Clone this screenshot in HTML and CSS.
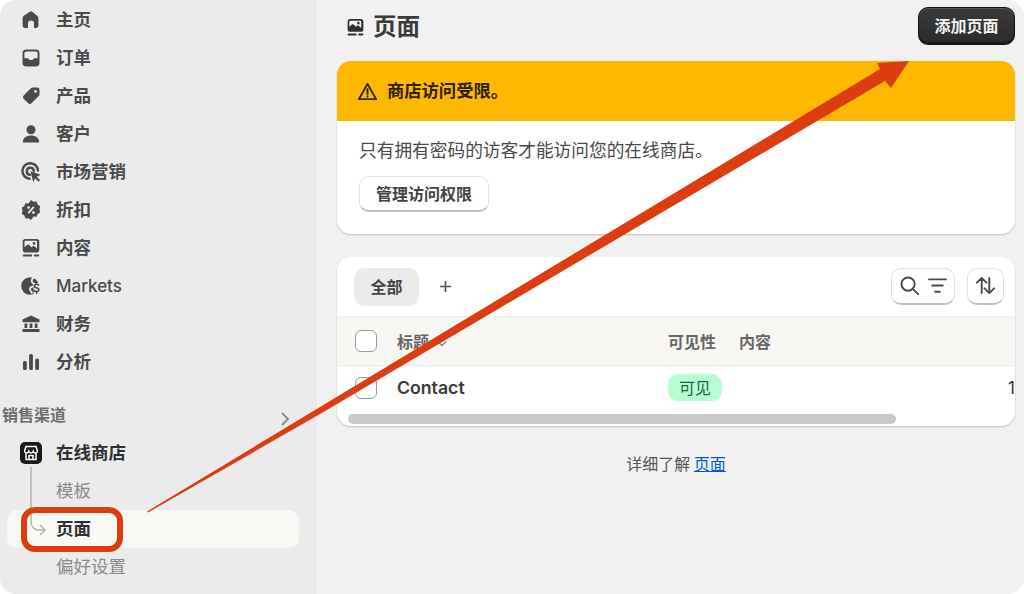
FILE: index.html
```html
<!DOCTYPE html>
<html lang="zh-CN">
<head>
<meta charset="utf-8">
<title>页面</title>
<link rel="stylesheet" href="styles.css">
</head>
<body>
<div class="app">
  <aside class="sidebar">
    <nav class="nav">
      <a class="row"><svg class="ico" viewBox="0 0 20 20"><path d="M8.400 1.900a2.400 2.400 0 0 1 3.200 0l4.900 4.200a2.600 2.600 0 0 1 .9 2v7.200a2.600 2.600 0 0 1-2.600 2.600H13v-4.400a3 3 0 0 0-6 0v4.400H4.200a2.600 2.600 0 0 1-2.600-2.600V8.100a2.600 2.600 0 0 1 .9-2z"/></svg><span>主页</span></a>
      <a class="row"><svg class="ico" viewBox="0 0 20 20"><path fill-rule="evenodd" d="M5.300 1.500h9.400A3.800 3.800 0 0 1 18.500 5.300v9.400a3.800 3.800 0 0 1-3.800 3.800H5.300a3.800 3.800 0 0 1-3.800-3.800V5.300A3.800 3.800 0 0 1 5.300 1.500zm0 1.900a1.900 1.900 0 0 0-1.900 1.900v4.900h2.900c.8 0 1.200.4 1.500 1 .3.500.9.900 2.200.9s1.900-.4 2.200-.9c.3-.6.700-1 1.500-1h2.900V5.300a1.900 1.900 0 0 0-1.900-1.900z"/></svg><span>订单</span></a>
      <a class="row"><svg class="ico" viewBox="0 0 20 20"><path fill-rule="evenodd" d="M11.800 1.500h4.400a2.300 2.300 0 0 1 2.300 2.300v4.400a2.600 2.600 0 0 1-.8 1.900l-7 7a2.600 2.600 0 0 1-3.700 0l-4.100-4.100a2.600 2.600 0 0 1 0-3.700l7-7a2.600 2.600 0 0 1 1.900-.8zm2.700 2.500a1.400 1.400 0 1 0 0 2.800 1.400 1.400 0 0 0 0-2.800z"/></svg><span>产品</span></a>
      <a class="row"><svg class="ico" viewBox="0 0 20 20"><circle cx="10" cy="5.800" r="4.500"/><path d="M10 11.500c4.500 0 7.800 2.300 8.200 6 .1.600-.4 1-1 1H2.800c-.6 0-1.100-.4-1-1 .4-3.700 3.700-6 8.200-6z"/></svg><span>客户</span></a>
      <a class="row"><svg class="ico" viewBox="0 0 20 20"><path class="ring" d="M17 8.500A7.800 7.800 0 1 0 8.500 16.800"/><path class="ring" d="M12.800 9a3.500 3.500 0 1 0-3.800 3.800"/><path d="M9.500 9.300l10.200 3.500-4 1.900 3.400 3.500-1.600 1.600-3.400-3.500-1.800 4z"/></svg><span>市场营销</span></a>
      <a class="row"><svg class="ico" viewBox="0 0 20 20"><path fill-rule="evenodd" d="M10 0l2.500 1.800 3.100-.2 1 2.900 2.700 1.700-.9 3 .9 3-2.700 1.700-1 2.900-3.100-.2L10 20l-2.500-1.800-3.100.2-1-2.900-2.700-1.700.9-3-.9-3 2.700-1.700 1-2.900 3.100.2zM12.200 6.300l-5.600 6.100 1.300 1.300 5.600-6.100zM7.600 6.200a1.400 1.400 0 1 0 0 2.800 1.400 1.400 0 0 0 0-2.800zm4.800 5a1.400 1.400 0 1 0 0 2.800 1.400 1.400 0 0 0 0-2.800z"/></svg><span>折扣</span></a>
      <a class="row"><svg class="ico" viewBox="0 0 20 20"><use href="#content-icon"/></svg><span>内容</span></a>
      <a class="row"><svg class="ico" viewBox="0 0 20 20"><circle cx="9" cy="10" r="8.800"/><rect class="cut-fill" x="12.500" y="7" width="7.500" height="13"/><path class="cut" d="M13.500 1c-2.500 1.500-3.200 3-2.700 4.500.4 1.500 2.600 1.800 2.300 3.600-.2 1.200-1.800 1.500-3.300 2.300-1 .6-1.200 1.600-.5 2.700l2 3.500"/><path d="M15.800 6v1.500c1.300.1 2.200.8 2.700 1.700l-1.300.8c-.4-.7-.9-1-1.600-1-.8 0-1.200.4-1.200.9 0 .6.400.8 1.500 1.200 1.600.5 2.700 1.200 2.700 2.700 0 1.400-1 2.300-2.300 2.500v1.700h-1.400v-1.700c-1.300-.2-2.300-.9-2.800-1.900l1.400-.8c.4.800 1 1.200 1.900 1.200.9 0 1.400-.4 1.400-1 0-.6-.4-.9-1.500-1.200-1.600-.5-2.700-1.200-2.700-2.600 0-1.300.8-2.200 2.200-2.400V6z"/></svg><span class="latin">Markets</span></a>
      <a class="row"><svg class="ico" viewBox="0 0 20 20"><path d="M10 1.500l8.500 4v2.800h-17V5.500z"/><path d="M3.500 9.500h2.800v4.500H3.500zM8.600 9.500h2.800v4.500H8.600zM13.700 9.500h2.800v4.500h-2.800zM1.500 15h17v3h-17z"/></svg><span>财务</span></a>
      <a class="row"><svg class="ico" viewBox="0 0 20 20"><rect x="2" y="9" width="3.800" height="9" rx="1.600"/><rect x="8.100" y="2" width="3.800" height="16" rx="1.600"/><rect x="14.200" y="6.500" width="3.800" height="11.500" rx="1.600"/></svg><span>分析</span></a>

      <div class="section"><span>销售渠道</span><svg class="chev" viewBox="0 0 12 16"><path d="M3 2l6 6-6 6"/></svg></div>

      <a class="row row-store"><svg class="ico" viewBox="0 0 22 22"><rect x="0" y="0" width="22" height="22" rx="5" fill="#1a1a1a"/><path class="store-lines" d="M6 4.500h10l1.500 4.500a2.200 2.200 0 0 1-4.300.4 2.300 2.300 0 0 1-4.400 0A2.200 2.200 0 0 1 4.500 9zM6 11v6.500h10V11M9 17.500v-4h4v4"/></svg><span>在线商店</span></a>
      <a class="row row-sub"><span>模板</span></a>
      <a class="row row-sub row-active"><span>页面</span></a>
      <a class="row row-sub"><span>偏好设置</span></a>
    </nav>
  </aside>

  <main class="main">
    <header class="top">
      <h1 class="title"><svg class="title-ico" viewBox="0 0 20 20"><use href="#content-icon"/></svg><span class="title-text">页面</span></h1>
      <button class="btn-dark">添加页面</button>
    </header>

    <section class="card">
      <div class="banner">
        <svg class="warn" viewBox="0 0 20 20"><path d="M10 2L19 18H1z"/><path d="M10 7.500v5M10 15v.3"/></svg>
        <strong class="banner-text">商店访问受限。</strong>
      </div>
      <div class="card-body">
        <p class="notice">只有拥有密码的访客才能访问您的在线商店。</p>
        <button class="btn-light">管理访问权限</button>
      </div>
    </section>

    <section class="card card-table">
      <div class="toolbar">
        <span class="tab">全部</span>
        <svg class="plus" viewBox="0 0 14 14"><path d="M7 1v12M1 7h12"/></svg>
        <span class="spacer"></span>
        <span class="tool tool-wide">
          <svg class="tool-ico" viewBox="0 0 20 20"><circle cx="8.500" cy="8.500" r="7"/><path d="M13.500 13.500l5.500 5.500"/></svg>
          <svg class="tool-ico" viewBox="0 0 20 20"><path d="M1 3.500h18M4.500 10h11M7.500 16.500h5"/></svg>
        </span>
        <span class="tool">
          <svg class="tool-ico" viewBox="0 0 20 20"><path d="M6 18V2M1 7l5-5 5 5M14 2v16M9 13l5 5 5-5"/></svg>
        </span>
      </div>
      <div class="grid grid-head">
        <span class="check"></span>
        <span class="th">标题<svg class="sort" viewBox="0 0 12 8"><path d="M1 1.500l5 5 5-5"/></svg></span>
        <span class="th">可见性</span>
        <span class="th">内容</span>
      </div>
      <div class="grid grid-row">
        <span class="check"></span>
        <span class="name">Contact</span>
        <span><span class="badge">可见</span></span>
        <span class="count">1</span>
      </div>
      <div class="scroll"><div class="thumb"></div></div>
    </section>

    <p class="foot">详细了解 <a class="link">页面</a></p>
  </main>
</div>

<svg class="overlay" viewBox="0 0 1024 594">
  <path class="tree" d="M31 467v55a8 8 0 0 0 8 8h6M40 525l5 5-5 5"/>
  <rect class="callout" x="24" y="510" width="96" height="39" rx="11"/>
  <polygon class="arrow" points="147,511.500 320,407 880,69 877,63 909,61 891,88 885,81 320,414 148,512.500"/>
</svg>

<svg class="defs" width="0" height="0">
  <symbol id="content-icon" viewBox="0 0 20 20">
    <path fill-rule="evenodd" d="M4.500 1h11A2.800 2.800 0 0 1 18.300 3.800v8A2.800 2.800 0 0 1 15.500 14.600h-11A2.800 2.800 0 0 1 1.700 11.800v-8A2.800 2.800 0 0 1 4.500 1zm0 1.800a1 1 0 0 0-1 1v5.500l2.800-2.500c.5-.4 1.100-.4 1.600 0l2.600 2.400 1.300-1c.5-.4 1.100-.4 1.600 0l2.600 2.300V3.800a1 1 0 0 0-1-1zM13 4a1.400 1.400 0 1 1 0 2.800A1.400 1.400 0 0 1 13 4z"/>
    <rect x="1.700" y="16.400" width="9.500" height="2" rx="1"/>
    <rect x="12.800" y="16.400" width="5.500" height="2" rx="1"/>
  </symbol>
</svg>
</body>
</html>
```
FILE: styles.css
```css
* { box-sizing: border-box; }
html, body { margin: 0; height: 100%; background: #fff; overflow: hidden; }
body {
  position: relative;
  font-family: "Noto Sans CJK SC", Inter, sans-serif;
  font-size: 16px;
  color: #303030;
}
.app {
  display: flex;
  width: 1024px;
  height: 594px;
  border-radius: 16px;
  overflow: hidden;
}

/* sidebar */
.sidebar {
  width: 316px;
  flex: none;
  background: #ebebeb;
  border-right: 1px solid #e6e6e6;
}
.nav { display: flex; flex-direction: column; padding: 1px 16px 0 2px; }
.row {
  display: flex;
  align-items: center;
  gap: 15px;
  height: 38px;
  margin-left: 5px;
  padding-left: 14px;
  font-size: 17.500px;
  font-weight: 700;
  color: #4a4a4a;
  border-radius: 10px;
}
.row > span { padding-bottom: 3px; }
.row > .latin { padding-bottom: 0; }
.ico { width: 20px; height: 20px; fill: #4a4a4a; flex: none; }
.ring { fill: none; stroke: #4a4a4a; stroke-width: 2.500; stroke-linecap: round; }
.cut { fill: none; stroke: #ebebeb; stroke-width: 1.800; }
.cut-fill { fill: #ebebeb; }
.latin { font-family: Inter, sans-serif; font-size: 17px; font-weight: 500; }
.section {
  display: flex;
  justify-content: space-between;
  align-items: center;
  height: 38px;
  margin-top: 15px;
  padding-right: 8px;
  font-size: 16px;
  font-weight: 700;
  color: #6d6d6d;
}
.section > span { padding-bottom: 2px; }
.chev {
  width: 12px;
  height: 16px;
  margin-top: 7px;
  fill: none;
  stroke: #8a8a8a;
  stroke-width: 1.800;
}
.row-store { color: #303030; padding-left: 13px; gap: 14px; }
.row-store .ico { width: 22px; height: 22px; }
.store-lines { fill: none; stroke: #fff; stroke-width: 1.500; }
.row-sub { padding-left: 49px; font-weight: 400; color: #8a8a8a; }
.row-active { background: #f8f8f4; color: #303030; font-weight: 700; }

/* main */
.main {
  flex: 1;
  min-width: 0;
  background: #f1f1f1;
  padding: 7px 9px 0 21px;
}
.top { display: flex; justify-content: space-between; align-items: flex-start; height: 54px; }
.title {
  display: flex;
  align-items: center;
  gap: 8px;
  margin: 2px 0 0 9px;
  height: 36px;
  font-size: 23.500px;
  font-weight: 700;
  color: #3a3a3a;
}
.title-text { padding-bottom: 4px; }
.title-ico { width: 19px; height: 19px; fill: #303030; }
button { font-family: inherit; font-size: 16px; font-weight: 700; }
.btn-dark {
  width: 97px;
  height: 38px;
  padding: 0 0 2px;
  color: #f4f4f4;
  background: linear-gradient(#3a3a3a, #2b2b2b);
  border: 1px solid #111;
  border-radius: 10px;
  box-shadow: inset 0 1px 0 #5a5a5a, inset 0 -2px 0 #1a1a1a;
}
.card {
  background: #fff;
  border-radius: 14px;
  overflow: hidden;
  box-shadow: 0 1px 2px rgba(0, 0, 0, .22);
}
.banner {
  display: flex;
  align-items: center;
  gap: 10px;
  height: 60px;
  padding-left: 21px;
  background: #ffb800;
  color: #2b2100;
  font-size: 17.300px;
}
.banner-text { padding-bottom: 3px; }
.warn { width: 19px; height: 19px; fill: none; stroke: #2b2100; stroke-width: 2; stroke-linejoin: round; stroke-linecap: round; }
.card-body { height: 113px; padding: 16px 22px 0; }
.notice { margin: 0 0 15px; height: 24px; line-height: 24px; font-size: 17.700px; color: #4a4a4a; }
.btn-light {
  display: block;
  width: 130px;
  height: 36px;
  padding: 0 0 2px;
  color: #444;
  background: #fff;
  border: 1px solid #e3e3e3;
  border-bottom: 2px solid #bdbdbd;
  border-radius: 10px;
}
.card-table { margin-top: 23px; height: 169px; }
.toolbar { display: flex; align-items: center; height: 59px; padding: 0 11px 0 17px; }
.tab {
  display: flex;
  align-items: center;
  justify-content: center;
  width: 65px;
  height: 38px;
  padding-bottom: 2px;
  background: #ebebeb;
  border-radius: 10px;
  font-weight: 700;
  color: #444;
}
.plus { width: 13px; height: 13px; margin-left: 20px; fill: none; stroke: #555; stroke-width: 1.800; }
.spacer { flex: 1; }
.tool {
  display: flex;
  align-items: center;
  justify-content: center;
  gap: 9px;
  width: 37px;
  height: 37px;
  margin-left: 12px;
  margin-top: -1px;
  background: #fff;
  border: 1px solid #e3e3e3;
  border-bottom: 2px solid #c4c4c4;
  border-radius: 10px;
}
.tool-wide { width: 64px; }
.tool-ico { width: 19px; height: 19px; fill: none; stroke: #4a4a4a; stroke-width: 2; stroke-linecap: round; stroke-linejoin: round; }
.grid {
  display: grid;
  grid-template-columns: 42px 271px 71px 1fr;
  align-items: center;
  padding-left: 18px;
}
.grid-head {
  height: 50px;
  background: #f7f6f3;
  border-top: 1px solid #efefec;
  border-bottom: 1px solid #e8e8e6;
}
.grid-row { height: 48px; padding-bottom: 5px; }
.check {
  display: block;
  width: 22px;
  height: 22px;
  background: #fff;
  border: 1px solid #9a9a9a;
  border-radius: 6px;
}
.th { display: flex; align-items: center; gap: 8px; font-weight: 700; color: #666; }
.sort { width: 10px; height: 7px; margin-top: 4px; fill: none; stroke: #777; stroke-width: 1.500; }
.name { font-family: Inter, sans-serif; font-size: 17.700px; font-weight: 600; color: #3a3a3a; }
.badge {
  display: inline-flex;
  align-items: center;
  justify-content: center;
  width: 54px;
  height: 27px;
  padding-bottom: 2px;
  background: #b4fed2;
  border-radius: 10px;
  color: #2d5d45;
}
.count { font-family: Inter, sans-serif; justify-self: end; font-size: 17px; }
.scroll { padding: 0 119px 0 11px; }
.thumb { height: 10px; background: #c9c9c9; border-radius: 5px; }
.foot { margin: 27px 0 0; text-align: center; line-height: 20px; color: #555; }
.link { color: #005bd3; text-decoration: underline; }

/* annotation layer */
.overlay {
  position: absolute;
  left: 0;
  top: 0;
  width: 1024px;
  height: 594px;
  pointer-events: none;
}
.tree { fill: none; stroke: #b3b3b3; stroke-width: 1.500; }
.callout { fill: none; stroke: #dc3c10; stroke-width: 6; }
.arrow { fill: #dc3c10; }
.defs { position: absolute; }
```
